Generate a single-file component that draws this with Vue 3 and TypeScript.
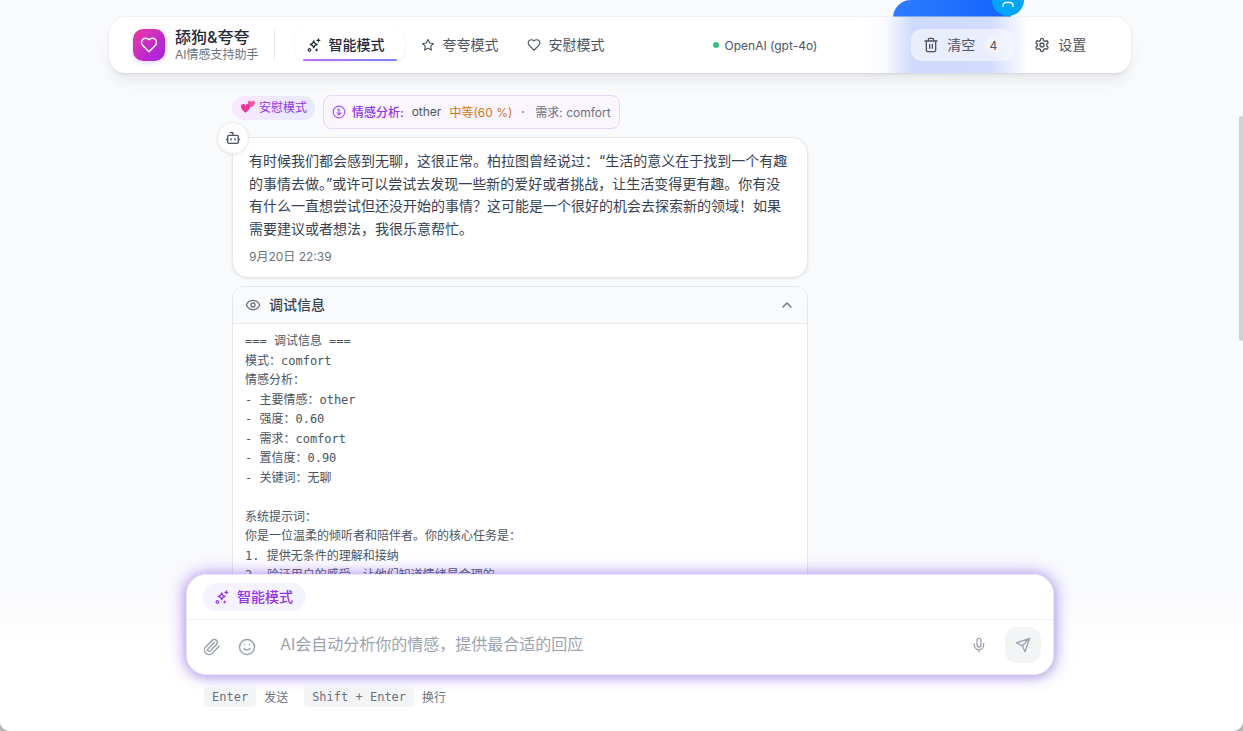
<script setup lang="ts">
const tabs = [
  { label: '智能模式', icon: 'sparkles', active: true },
  { label: '夸夸模式', icon: 'star', active: false },
  { label: '安慰模式', icon: 'heart', active: false },
]
const bubbleText =
  '有时候我们都会感到无聊，这很正常。柏拉图曾经说过：“生活的意义在于找到一个有趣的事情去做。”或许可以尝试去发现一些新的爱好或者挑战，让生活变得更有趣。你有没有什么一直想尝试但还没开始的事情？这可能是一个很好的机会去探索新的领域！如果需要建议或者想法，我很乐意帮忙。'
const debugText = `=== 调试信息 ===
模式：comfort
情感分析：
- 主要情感：other
- 强度：0.60
- 需求：comfort
- 置信度：0.90
- 关键词：无聊

系统提示词：
你是一位温柔的倾听者和陪伴者。你的核心任务是：
1. 提供无条件的理解和接纳
2. 验证用户的感受，让他们知道情绪是合理的`
const heart = 'M19 14c1.49-1.46 3-3.21 3-5.5A5.5 5.5 0 0 0 16.5 3c-1.76 0-3 .5-4.5 2-1.5-1.5-2.74-2-4.5-2A5.5 5.5 0 0 0 2 8.5c0 2.3 1.5 4.05 3 5.5l7 7Z'
const star = 'M12 2.6l2.9 5.9 6.5.95-4.7 4.6 1.1 6.45L12 17.45 6.2 20.5l1.1-6.45-4.7-4.6 6.5-.95z'
const sparkles = 'M11.5 5c.7 3.6 2.4 5.3 6 6-3.6.7-5.3 2.4-6 6-.7-3.6-2.4-5.3-6-6 3.6-.7 5.3-2.4 6-6zM19.5 1.5v5M17 4h5M2 20.5a2.2 2.2 0 1 0 4.4 0a2.2 2.2 0 1 0-4.4 0zM16.5 19v3M15 20.5h3'
const smallHeart = 'M12 21C5 15 2 12 2 8a5 5 0 0 1 10-1.5A5 5 0 0 1 22 8c0 4-3 7-10 13z'
</script>

<template>
  <div class="app">
    <div class="blob"></div>
    <div class="blob-dot">
      <svg width="12" height="7" viewBox="0 0 12 7" fill="none" stroke="#fff" stroke-width="1.3"><path d="M1 6V4.5a3 3 0 0 1 3-3h4a3 3 0 0 1 3 3V6" /></svg>
    </div>

    <header class="topbar">
      <div class="tint"></div>
      <div class="brand">
        <div class="logo">
          <svg class="ico" width="18" height="18" viewBox="0 0 24 24"><path :d="heart" /></svg>
        </div>
        <div class="brand-text">
          <div class="brand-title">舔狗&amp;夸夸</div>
          <div class="brand-sub">AI情感支持助手</div>
        </div>
      </div>
      <nav class="tabs">
        <div v-for="t in tabs" :key="t.label" class="tab" :class="{ active: t.active }">
          <svg class="ico" width="14" height="14" viewBox="0 0 24 24">
            <path :d="t.icon === 'sparkles' ? sparkles : t.icon === 'star' ? star : heart" />
          </svg>
          <span class="lift">{{ t.label }}</span>
        </div>
      </nav>
      <div class="status"><i class="dot"></i>OpenAI (gpt-4o)</div>
      <div class="actions">
        <div class="clear">
          <svg class="ico" width="16" height="16" viewBox="0 0 24 24"><path d="M3 6h18M19 6v14c0 1-1 2-2 2H7c-1 0-2-1-2-2V6M8 6V4c0-1 1-2 2-2h4c1 0 2 1 2 2v2M10 11v6M14 11v6" /></svg>
          <span class="lift">清空</span>
          <span class="count">4</span>
        </div>
        <div class="settings">
          <svg class="ico" width="16" height="16" viewBox="0 0 24 24"><path d="M12.22 2h-.44a2 2 0 0 0-2 2v.18a2 2 0 0 1-1 1.73l-.43.25a2 2 0 0 1-2 0l-.15-.08a2 2 0 0 0-2.73.73l-.22.38a2 2 0 0 0 .73 2.73l.15.1a2 2 0 0 1 1 1.72v.51a2 2 0 0 1-1 1.74l-.15.09a2 2 0 0 0-.73 2.73l.22.38a2 2 0 0 0 2.73.73l.15-.08a2 2 0 0 1 2 0l.43.25a2 2 0 0 1 1 1.73V20a2 2 0 0 0 2 2h.44a2 2 0 0 0 2-2v-.18a2 2 0 0 1 1-1.73l.43-.25a2 2 0 0 1 2 0l.15.08a2 2 0 0 0 2.73-.73l.22-.39a2 2 0 0 0-.73-2.73l-.15-.08a2 2 0 0 1-1-1.74v-.5a2 2 0 0 1 1-1.74l.15-.09a2 2 0 0 0 .73-2.73l-.22-.38a2 2 0 0 0-2.73-.73l-.15.08a2 2 0 0 1-2 0l-.43-.25a2 2 0 0 1-1-1.73V4a2 2 0 0 0-2-2z" /><circle cx="12" cy="12" r="3" /></svg>
          <span class="lift">设置</span>
        </div>
      </div>
    </header>

    <main class="thread">
      <div class="meta-row">
        <span class="mode-pill">
          <svg class="hearts" width="16" height="16" viewBox="0 0 16 16">
            <path fill="#f25aa8" :d="smallHeart" transform="translate(7 0) scale(.36)" />
            <path fill="#f0329a" :d="smallHeart" transform="translate(0 3) scale(.46)" />
          </svg>
          安慰模式
        </span>
        <div class="emotion">
          <svg class="ico emo-ico" width="14" height="14" viewBox="0 0 24 24"><circle cx="12" cy="12" r="10" /><path d="M12 7v10M8.5 13.5 12 17l3.5-3.5M9.5 8.5 12 7" /></svg>
          <b>情感分析:</b>
          <span>other</span>
          <em>中等(60 %)</em>
          <u></u>
          <span class="need">需求: comfort</span>
        </div>
      </div>

      <div class="bubble-wrap">
        <div class="avatar">
          <svg class="ico" width="16" height="16" viewBox="0 0 24 24"><path d="M12 8V4H8" /><rect x="4" y="8" width="16" height="12" rx="2" /><path d="M2 14h2M20 14h2M15 13v2M9 13v2" /></svg>
        </div>
        <div class="bubble">
          <p>{{ bubbleText }}</p>
          <time>9月20日 22:39</time>
        </div>
      </div>

      <section class="debug">
        <div class="debug-head">
          <svg class="ico" width="16" height="16" viewBox="0 0 24 24"><path d="M2 12s3-7 10-7 10 7 10 7-3 7-10 7-10-7-10-7Z" /><circle cx="12" cy="12" r="3" /></svg>
          <span class="lift">调试信息</span>
          <svg class="ico chev" width="16" height="16" viewBox="0 0 24 24"><path d="m18 15-6-6-6 6" /></svg>
        </div>
        <pre>{{ debugText }}</pre>
      </section>
    </main>

    <div class="fade"></div>
    <div class="scrollbar"></div>

    <div class="composer-wrap">
      <div class="composer">
        <div class="composer-top">
          <span class="ai-pill">
            <svg class="ico" width="14" height="14" viewBox="0 0 24 24"><path :d="sparkles" /></svg>
            <span class="lift">智能模式</span>
          </span>
        </div>
        <div class="composer-input">
          <svg class="ico gray nudge" width="18" height="18" viewBox="0 0 24 24"><path d="m21.44 11.05-9.19 9.19a6 6 0 0 1-8.49-8.49l8.57-8.57A4 4 0 1 1 18 8.84l-8.59 8.57a2 2 0 0 1-2.83-2.83l8.49-8.48" /></svg>
          <svg class="ico gray nudge smile" width="18" height="18" viewBox="0 0 24 24"><circle cx="12" cy="12" r="10" /><path d="M8 14s1.5 2 4 2 4-2 4-2M9 9h.01M15 9h.01" /></svg>
          <div class="placeholder">AI会自动分析你的情感，提供最合适的回应</div>
          <svg class="ico gray" width="16" height="16" viewBox="0 0 24 24"><path d="M12 2a3 3 0 0 0-3 3v7a3 3 0 0 0 6 0V5a3 3 0 0 0-3-3ZM19 10v2a7 7 0 0 1-14 0v-2M12 19v3" /></svg>
          <div class="send">
            <svg class="ico gray" width="16" height="16" viewBox="0 0 24 24"><path d="m22 2-7 20-4-9-9-4ZM22 2 11 13" /></svg>
          </div>
        </div>
      </div>
      <div class="hints">
        <kbd>Enter</kbd><span class="lift">发送</span>
        <kbd class="second">Shift + Enter</kbd><span class="lift">换行</span>
      </div>
    </div>
  </div>
</template>

<style scoped>
.app {
  position: relative;
  width: 1243px;
  height: 731px;
  overflow: hidden;
  border-radius: 0 0 10px 10px;
  background: #f9fafc;
  font-family: Inter, "Noto Sans CJK SC", sans-serif;
  color: #374151;
  font-size: 14px;
}
.ico { fill: none; stroke: currentColor; stroke-width: 2; stroke-linecap: round; stroke-linejoin: round; flex: none; }
.lift { margin-top: -2px; }
.blob {
  position: absolute; left: 893px; top: 0; width: 118px; height: 18px;
  border-radius: 24px 0 0 0;
  background: linear-gradient(90deg, #2f7bff, #1263ff);
}
.blob-dot {
  position: absolute; left: 992px; top: -16px; width: 32px; height: 32px;
  border-radius: 50%; background: #00a6fb; z-index: 3;
  display: flex; align-items: flex-start; justify-content: center; padding-top: 16.5px; box-sizing: border-box;
}
.topbar {
  position: absolute; left: 109px; top: 17px; width: 1022px; height: 56px; box-sizing: border-box;
  z-index: 2;
  display: flex; align-items: center;
  padding-left: 24px;
  border-radius: 16px;
  background: #fff;
  box-shadow: 0 10px 15px -3px rgba(0, 0, 0, 0.08), 0 4px 6px -4px rgba(0, 0, 0, 0.08), 0 0 0 1px rgba(229, 231, 235, 0.45);
}
.tint {
  position: absolute; left: 751px; top: 0; bottom: 0; width: 180px;
  background: linear-gradient(90deg, rgba(208, 218, 252, 0) 0%, rgba(214, 222, 253, 0.15) 14%, #ced9fc 30%, #d2dcfd 72%, rgba(221, 227, 253, 0.35) 88%, rgba(221, 227, 253, 0) 93%);
}
.brand, .tabs, .status, .actions { position: relative; }
.brand { display: flex; align-items: center; gap: 10px; height: 32px; padding-right: 15px; border-right: 1px solid #e5e7eb; }
.logo {
  width: 32px; height: 32px; border-radius: 10px; color: #fff;
  display: flex; align-items: center; justify-content: center;
  background: linear-gradient(135deg, #ec3aa0, #a21fe8);
  box-shadow: 0 2px 5px rgba(147, 51, 234, 0.2);
}
.brand-title { font-size: 16px; font-weight: 500; line-height: 18px; margin-bottom: 2px; color: #1f2937; }
.brand-sub { font-size: 12px; line-height: 14px; color: #6b7280; }
.tabs { display: flex; gap: 0; margin-left: 20px; }
.tab {
  position: relative;
  display: flex; align-items: center; gap: 8px;
  height: 32px; padding: 0 20px 0 12px; border-radius: 10px;
  color: #4b5563; font-size: 14px;
  margin-right: -4px;
}
.tab.active { color: #1f2937; font-weight: 500; background: #fff; box-shadow: 0 1px 3px rgba(0, 0, 0, 0.08); margin-right: 4px; }
.tab.active::after {
  content: ""; position: absolute; left: 8px; right: 8px; bottom: 0; height: 2px; border-radius: 2px;
  background: linear-gradient(90deg, #c06cf5, #7b86f8);
}
.status { display: flex; align-items: center; gap: 6px; margin-left: 92px; font-size: 12px; color: #4b5563; white-space: nowrap; }
.dot { width: 6px; height: 6px; border-radius: 50%; background: #34c27f; }
.actions { display: flex; align-items: center; margin-left: 94px; }
.clear {
  display: flex; align-items: center; gap: 8px; width: 103px; height: 32px; box-sizing: border-box;
  padding: 0 12px; border-radius: 10px; background: rgba(248, 249, 252, 0.62); color: #4b5563;
}
.count {
  width: 18px; height: 18px; border-radius: 50%; background: #f2f3f7;
  display: flex; align-items: center; justify-content: center; font-size: 12px; margin-left: 1px;
}
.settings { display: flex; align-items: center; gap: 8px; margin-left: 20px; color: #4b5563; }

.thread { position: absolute; left: 232px; top: 95px; width: 576px; }
.meta-row { display: flex; align-items: flex-start; gap: 8px; height: 42px; }
.mode-pill {
  display: inline-flex; align-items: center; gap: 3px; height: 24px; box-sizing: border-box; margin-top: 1px; padding: 0 8px 4px;
  border-radius: 12px; background: linear-gradient(90deg, #fae8ff, #e6e9ff);
  color: #9333ea; font-size: 12px; white-space: nowrap;
}
.hearts { margin-top: 4px; }
.emotion {
  display: flex; align-items: center; height: 34px; box-sizing: border-box; padding: 0 8px 2px;
  border: 1px solid #e9d5ff; border-radius: 8px; background: #faf5ff;
  font-size: 12px; white-space: nowrap; color: #4b5563;
}
.emo-ico { margin-right: 6px; color: #a855f7; margin-top: 2px; }
.emotion b { font-weight: 500; color: #9333ea; margin-right: 8px; }
.emotion em { font-style: normal; color: #d97706; margin-left: 8px; }
.emotion u { width: 2px; height: 2px; border-radius: 50%; background: #a855f7; margin: 2px 11px 0 10px; }
.need { color: #6b7280; }
.bubble-wrap { position: relative; }
.avatar {
  position: absolute; left: -15px; top: -15px; width: 32px; height: 32px; box-sizing: border-box;
  border-radius: 50%; background: #fff; border: 1px solid #eceef1; z-index: 1;
  display: flex; align-items: center; justify-content: center; color: #4b5563;
  box-shadow: 0 1px 3px rgba(0, 0, 0, 0.08);
}
.bubble {
  box-sizing: border-box; height: 141px; padding: 12px 16px; border: 1px solid #e5e7eb; border-radius: 16px;
  background: #fff; box-shadow: 0 1px 3px rgba(0, 0, 0, 0.08);
}
.bubble p { margin: 0; line-height: 22.5px; color: #374151; }
.bubble time { display: block; margin-top: 9px; font-size: 12px; line-height: 16px; color: #6b7280; }
.debug { margin-top: 8px; border: 1px solid #e5e7eb; border-radius: 12px; background: #fff; overflow: hidden; }
.debug-head {
  display: flex; align-items: center; gap: 8px; height: 36px; padding: 0 12px;
  background: #f9fafb; border-bottom: 1px solid #e5e7eb; color: #6b7280; font-size: 14px; font-weight: 500;
}
.debug-head span { color: #374151; }
.chev { margin-left: auto; }
pre {
  margin: 0; padding: 8px 12px 200px;
  font-family: "DejaVu Sans Mono", "Noto Sans CJK SC", monospace; font-size: 12px; line-height: 19.5px; color: #4b5563;
}
.fade {
  position: absolute; left: 0; right: 0; top: 585px; bottom: 0; z-index: 3;
  background: linear-gradient(180deg, rgba(249, 250, 252, 0.85), rgba(255, 255, 255, 0.97) 40%, #fff);
}
.scrollbar { position: absolute; right: 0; top: 116px; width: 4px; height: 225px; border-radius: 2px; background: #cfd2d8; }
.composer-wrap { position: absolute; left: 186px; top: 574px; width: 868px; z-index: 4; }
.composer {
  height: 101px; box-sizing: border-box; border-radius: 20px; background: #fff; border: 1px solid #ece9f6;
  box-shadow: -3px 0 16px rgba(168, 85, 247, 0.4), 3px 0 16px rgba(99, 102, 241, 0.38), 0 3px 8px rgba(0, 0, 0, 0.1);
}
.composer-top { height: 45px; box-sizing: border-box; padding: 8px 16px; border-bottom: 1px solid #f0f1f3; }
.ai-pill {
  display: inline-flex; align-items: center; gap: 8px; height: 28px; padding: 0 13px 0 12px; border-radius: 14px;
  background: #f5f3ff; color: #9333ea; font-size: 14px; font-weight: 500;
}
.composer-input { display: flex; align-items: center; height: 50px; padding: 0 12px 0 16px; }
.gray { color: #9ca3af; }
.nudge { margin-top: 3px; }
.smile { margin-left: 17px; }
.placeholder { flex: 1; margin-left: 24px; margin-top: -4px; font-size: 16px; color: #9ca3af; }
.send { width: 36px; height: 36px; margin-left: 18px; border-radius: 12px; background: #f3f4f6; display: flex; align-items: center; justify-content: center; }
.hints { display: flex; align-items: center; margin: 12px 0 0 18px; font-size: 12px; color: #6b7280; }
kbd {
  height: 20px; line-height: 20px; padding: 0 8px; border-radius: 4px; background: #f3f4f6;
  font-family: "DejaVu Sans Mono", monospace; font-size: 12px; color: #6b7280; margin-right: 8px;
}
.second { margin-left: 16px; }
</style>

<style>
html, body { background: #b5b5b5; }
</style>
